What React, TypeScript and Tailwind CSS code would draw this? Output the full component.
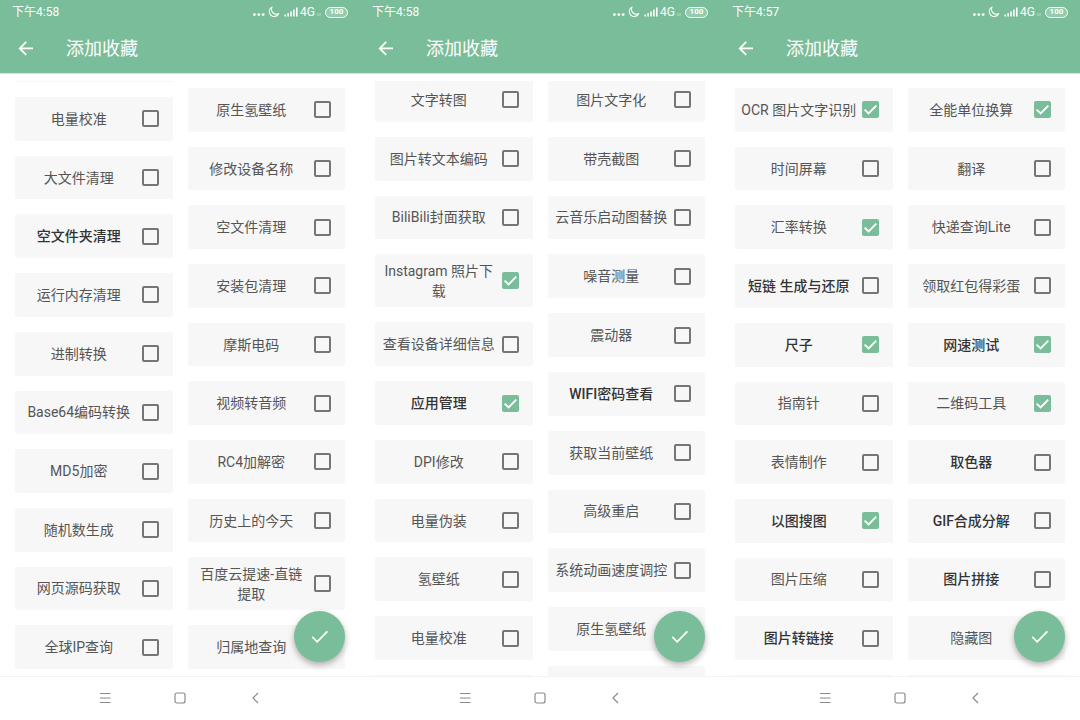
import { useState } from "react";
import { clsx } from "clsx";

type Item = { name: string; bold?: boolean; checked?: boolean; tall?: boolean };

type Column = {
    // "cut" columns are scrolled a few pixels under the header
    top: "cut" | "edge" | "inset";
    // what is left visible under the last full card
    bottom: "none" | "edge" | "part";
    items: Item[];
};

type Screen = { id: string; time: string; columns: Column[] };

const screens: Screen[] = [
    {
        id: "tools",
        time: "下午4:58",
        columns: [
            {
                top: "edge",
                bottom: "none",
                items: [
                    { name: "电量校准" },
                    { name: "大文件清理" },
                    { name: "空文件夹清理", bold: true },
                    { name: "运行内存清理" },
                    { name: "进制转换" },
                    { name: "Base64编码转换" },
                    { name: "MD5加密" },
                    { name: "随机数生成" },
                    { name: "网页源码获取" },
                    { name: "全球IP查询" },
                ],
            },
            {
                top: "inset",
                bottom: "none",
                items: [
                    { name: "原生氢壁纸" },
                    { name: "修改设备名称" },
                    { name: "空文件清理" },
                    { name: "安装包清理" },
                    { name: "摩斯电码" },
                    { name: "视频转音频" },
                    { name: "RC4加解密" },
                    { name: "历史上的今天" },
                    { name: "百度云提速-直链提取", tall: true },
                    { name: "归属地查询" },
                ],
            },
        ],
    },
    {
        id: "system",
        time: "下午4:58",
        columns: [
            {
                top: "cut",
                bottom: "edge",
                items: [
                    { name: "文字转图" },
                    { name: "图片转文本编码" },
                    { name: "BiliBili封面获取" },
                    { name: "Instagram 照片下载", checked: true, tall: true },
                    { name: "查看设备详细信息" },
                    { name: "应用管理", bold: true, checked: true },
                    { name: "DPI修改" },
                    { name: "电量伪装" },
                    { name: "氢壁纸" },
                    { name: "电量校准" },
                ],
            },
            {
                top: "cut",
                bottom: "part",
                items: [
                    { name: "图片文字化" },
                    { name: "带壳截图" },
                    { name: "云音乐启动图替换" },
                    { name: "噪音测量" },
                    { name: "震动器" },
                    { name: "WIFI密码查看", bold: true },
                    { name: "获取当前壁纸" },
                    { name: "高级重启" },
                    { name: "系统动画速度调控" },
                    { name: "原生氢壁纸" },
                ],
            },
        ],
    },
    {
        id: "daily",
        time: "下午4:57",
        columns: [
            {
                top: "inset",
                bottom: "edge",
                items: [
                    { name: "OCR 图片文字识别", checked: true },
                    { name: "时间屏幕" },
                    { name: "汇率转换", checked: true },
                    { name: "短链 生成与还原", bold: true },
                    { name: "尺子", bold: true, checked: true },
                    { name: "指南针" },
                    { name: "表情制作" },
                    { name: "以图搜图", bold: true, checked: true },
                    { name: "图片压缩" },
                    { name: "图片转链接", bold: true },
                ],
            },
            {
                top: "inset",
                bottom: "edge",
                items: [
                    { name: "全能单位换算", checked: true },
                    { name: "翻译" },
                    { name: "快递查询Lite" },
                    { name: "领取红包得彩蛋" },
                    { name: "网速测试", bold: true, checked: true },
                    { name: "二维码工具", checked: true },
                    { name: "取色器", bold: true },
                    { name: "GIF合成分解", bold: true },
                    { name: "图片拼接", bold: true },
                    { name: "隐藏图" },
                ],
            },
        ],
    },
];

function StatusBar({ time }: { time: string }) {
    return (
        <div className="flex h-6 items-center justify-between px-3 text-xs leading-4">
            <span>{time}</span>
            <div className="flex items-center">
                <svg width="46" height="12" viewBox="0 0 46 12" fill="currentColor" aria-hidden="true">
                    <circle cx="2.4" cy="8.6" r="1.4" />
                    <circle cx="6.8" cy="8.6" r="1.4" />
                    <circle cx="11.2" cy="8.6" r="1.4" />
                    <path
                        d="M20 1A5 5 0 1 0 26.8 7.6 5 5 0 0 1 20 1Z"
                        fill="none"
                        stroke="currentColor"
                        strokeWidth="1.1"
                        strokeLinejoin="round"
                    />
                    <path d="M32.4 8.6H34v1.9h-1.6zM35.3 7.2h1.6v3.3h-1.6zM38.2 5.4h1.6v5.1h-1.6zM41.1 3.4h1.6v7.1h-1.6zM44 1.4h1.6v9.1H44z" />
                </svg>
                <span className="ml-0.5">4G</span>
                <svg className="mr-1 ml-0.5" width="4" height="12" viewBox="0 0 4 12" aria-hidden="true">
                    <path d="M1 7v3M3 7v3" stroke="currentColor" strokeWidth="0.7" opacity="0.6" />
                </svg>
                <span className="flex h-[11px] w-[23px] items-center justify-center rounded-full border border-white bg-white/20 text-[8px] leading-none font-bold">
                    100
                </span>
            </div>
        </div>
    );
}

function ItemCard({ item, screenId }: { item: Item; screenId: string }) {
    const [checked, setChecked] = useState(Boolean(item.checked));
    const id = `${screenId}-${item.name}`;

    return (
        <li
            className={clsx(
                "flex items-center rounded-xs bg-[#f7f7f7] pr-3.5",
                item.tall ? "h-[53px] flex-none" : "min-h-10 flex-1",
            )}
        >
            <label
                htmlFor={id}
                className={clsx(
                    "flex-1 pr-[5px] pl-1.5 text-center text-sm leading-5",
                    item.bold ? "font-medium text-[#333333]" : "text-[#555555]",
                )}
            >
                {item.name}
            </label>
            <span className="relative flex flex-none">
                <input
                    id={id}
                    type="checkbox"
                    checked={checked}
                    onChange={(e) => setChecked(e.target.checked)}
                    className="size-[17px] appearance-none rounded-xs border-2 border-[#757575] checked:border-[#7abd9a] checked:bg-[#7abd9a]"
                />
                {checked && (
                    <svg
                        className="pointer-events-none absolute inset-0"
                        width="17"
                        height="17"
                        viewBox="0 0 17 17"
                        fill="none"
                        stroke="white"
                        strokeWidth="1.9"
                        aria-hidden="true"
                    >
                        <path d="M2.6 8.6 6.6 12.5 14.3 4.7" />
                    </svg>
                )}
            </span>
        </li>
    );
}

function ItemColumn({ column, screenId }: { column: Column; screenId: string }) {
    return (
        <ul
            className={clsx(
                "flex min-w-0 flex-1 flex-col gap-[15px]",
                column.top === "cut" && "-mt-[3px]",
                column.top === "inset" && "pt-[7px]",
                column.bottom === "none" && "pb-[7px]",
            )}
        >
            {column.top === "edge" && <li className="h-px flex-none bg-[#f7f7f7]" aria-hidden="true" />}
            {column.items.map((item) => (
                <ItemCard key={item.name} item={item} screenId={screenId} />
            ))}
            {column.bottom === "edge" && <li className="h-px flex-none bg-[#f7f7f7]" aria-hidden="true" />}
            {column.bottom === "part" && (
                <li className="h-2.5 flex-none rounded-t-xs bg-[#f7f7f7]" aria-hidden="true" />
            )}
        </ul>
    );
}

function NavBar() {
    return (
        <nav className="flex h-11 flex-none justify-center border-t border-[#f2f2f2] pb-px text-[#8a8a8a]">
            <button type="button" aria-label="菜单" className="flex w-[75px] items-center justify-center">
                <svg width="12" height="12" viewBox="0 0 12 12" stroke="currentColor" fill="none">
                    <path d="M1 1.5h10.5M1 6h10.5M1 10.5h10.5" />
                </svg>
            </button>
            <button type="button" aria-label="主页" className="flex w-[75px] items-center justify-center">
                <svg width="12" height="12" viewBox="0 0 12 12" stroke="currentColor" fill="none">
                    <rect x="1" y="1" width="10" height="10" rx="2" strokeWidth="1.2" />
                </svg>
            </button>
            <button type="button" aria-label="返回" className="flex w-[75px] items-center justify-center">
                <svg width="12" height="12" viewBox="0 0 12 12" stroke="currentColor" fill="none">
                    <path d="M9 1 4 6l5 5" strokeWidth="1.2" />
                </svg>
            </button>
        </nav>
    );
}

function PhoneScreen({ screen }: { screen: Screen }) {
    return (
        <section className="relative flex min-w-0 flex-col">
            <header className="flex-none border-b border-[#cfe6da] bg-[#7abd9a] text-white">
                <StatusBar time={screen.time} />
                <div className="flex h-[49px] items-center pl-[18px]">
                    <button type="button" aria-label="返回">
                        <svg width="16" height="16" viewBox="0 0 16 16" fill="none" stroke="white" strokeWidth="1.8" aria-hidden="true">
                            <path d="M15 7.4H2M8.2 .9 1.7 7.4l6.5 6.5" />
                        </svg>
                    </button>
                    <h1 className="ml-8 text-lg leading-6">添加收藏</h1>
                </div>
            </header>
            <main className="flex min-h-0 flex-1 pt-[7px]">
                <div className="flex flex-1 gap-[15px] overflow-hidden px-[15px]">
                    {screen.columns.map((column, i) => (
                        <ItemColumn key={i} column={column} screenId={screen.id} />
                    ))}
                </div>
            </main>
            <button
                type="button"
                aria-label="完成"
                className="absolute right-[15px] bottom-[58px] flex size-[51px] items-center justify-center rounded-full bg-[#7abd9a] shadow-[0_3px_6px_rgba(0,0,0,0.3)]"
            >
                <svg width="18" height="14" viewBox="0 0 18 14" fill="none" stroke="white" strokeWidth="1.8" aria-hidden="true">
                    <path d="M1.3 6.9 6.2 11.8 16.4 1.4" />
                </svg>
            </button>
            <NavBar />
        </section>
    );
}

export default function App() {
    return (
        <div className="grid min-h-screen grid-cols-3 bg-white font-[Roboto,'Noto_Sans_CJK_SC',sans-serif]">
            {screens.map((screen) => (
                <PhoneScreen key={screen.id} screen={screen} />
            ))}
        </div>
    );
}
